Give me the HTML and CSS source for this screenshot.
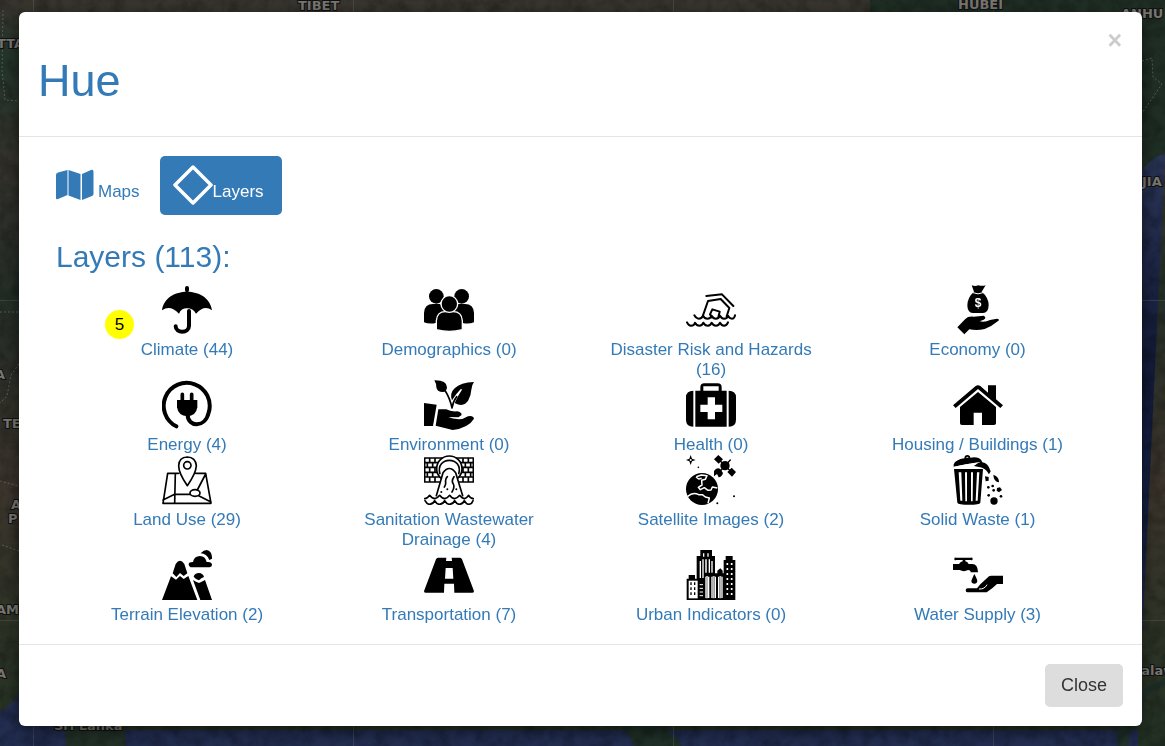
FILE: index.html
```html
<!DOCTYPE html>
<html lang="en">
<head>
<meta charset="utf-8">
<meta name="viewport" content="width=device-width, initial-scale=1">
<title>Hue</title>
<link rel="stylesheet" href="styles.css">
</head>
<body>
<svg class="map" viewBox="0 0 1165 746" preserveAspectRatio="xMidYMid slice" aria-hidden="true">
  <defs>
    <linearGradient id="sea" x1="0" y1="0" x2="0" y2="1">
      <stop offset="0" stop-color="#2a3556"/><stop offset=".35" stop-color="#131c3a"/><stop offset=".6" stop-color="#142042"/><stop offset=".8" stop-color="#242f52"/><stop offset="1" stop-color="#222d50"/>
    </linearGradient>
    <linearGradient id="west" x1="0" y1="0" x2="0" y2="1">
      <stop offset="0" stop-color="#38352f"/><stop offset=".08" stop-color="#233529"/><stop offset=".22" stop-color="#35332d"/><stop offset=".4" stop-color="#242e27"/><stop offset=".65" stop-color="#3c352d"/><stop offset=".85" stop-color="#2e3427"/><stop offset="1" stop-color="#233124"/>
    </linearGradient>
    <filter id="terrain"><feTurbulence type="fractalNoise" baseFrequency=".08" numOctaves="4" seed="4"/><feColorMatrix values="0 0 0 0 0  0 0 0 0 0  0 0 0 0 0  1.4 0 0 0 -.5"/></filter>
  </defs>
  <rect width="1165" height="746" fill="url(#west)"/>
  <path d="M0 0H1165V14H0Z" fill="#38352f"/>
  <path d="M870 0H1165V152L1142 170H870Z" fill="#202f25"/>
  <path d="M1165 154Q1152 156 1138 175V746H0V712Q14 705 20 690L80 710L90 730H1138Z" fill="url(#sea)"/>
  <path d="M64 720H124L126 746H66Z" fill="#223128"/>
  <path d="M617 720H655L680 742L682 746H635Z" fill="#203028"/>
  <path d="M1138 692L1165 678V684L1138 701ZM1116 726H1131L1128 746H1118Z" fill="#20322b"/>
  <rect width="1165" height="746" filter="url(#terrain)" opacity=".35"/>
  <path d="M0 300.500H1165M0 620.500H1165M33.500 0V746M353.500 0V746M673.500 0V746M993.500 0V746" stroke="#6b7770" stroke-opacity=".3" fill="none"/>
  <path d="M3 10L2 70L5 100L19 101M0 312H19M19 364L11 375L7 396L0 403M0 481L19 486M2 545L19 551M1142 61L1152 58L1153 77L1162 84L1142 113" stroke="#777" stroke-opacity=".6" stroke-dasharray="2 2" fill="none"/>
  <g class="map-labels">
    <text x="298" y="10">TIBET</text><text x="958" y="9">HUBEI</text><text x="1121" y="18">ANHU</text>
    <text x="-3" y="48">TTA</text><text x="1142" y="186">JIA</text><text x="-5" y="379">A</text><text x="3" y="428">TE</text>
    <text x="11" y="509">A</text><text x="8" y="523">P</text><text x="-4" y="614">AM</text><text x="-4" y="678">A</text>
    <text x="54" y="730">Sri Lanka</text><text x="1132" y="675">Palaw</text>
  </g>
</svg>

<main class="modal" role="dialog" aria-labelledby="title">
  <header class="modal-header">
    <h1 class="title" id="title">Hue</h1>
    <button class="dismiss" type="button" aria-label="Dismiss">×</button>
  </header>

  <section class="modal-body">
    <nav class="tabs">
      <a class="tab" href="#maps">
        <svg class="tab-icon" viewBox="0 0 40 40"><path fill="currentColor" d="M1 10Q1 8 3 7.500L12.500 5V30L3 34Q1 35 1 33ZM13.500 5L25.500 9V35L13.500 30.500ZM27 9L36 5Q38.500 4 38.500 7V29Q38.500 30.500 37 31L27 35Z"/></svg>
        <span class="tab-text spaced">Maps</span>
      </a>
      <a class="tab active" href="#layers" aria-current="page">
        <svg class="tab-icon" viewBox="0 0 40 40"><path fill="none" stroke="currentColor" stroke-width="3.500" stroke-linejoin="round" d="M20 2L38 20L20 38L2 20Z"/></svg>
        <span class="tab-text">Layers</span>
      </a>
    </nav>

    <h2 class="subtitle">Layers (113):</h2>

    <div class="layers">
      <a class="layer" href="#climate">
        <span class="badge">5</span>
        <svg class="icon" viewBox="0 0 150 150"><path d="M0 76C5 38 40 20 75 20S145 38 150 76Q127 58 102 86Q93 70 75 70T51 86Q25 58 0 76Z"/><path class="line" stroke-width="12" d="M75 9V16M81 78V122C81 147 41 145 41 124"/></svg>
        <span>Climate (44)</span>
      </a>
      <a class="layer" href="#demographics">
        <svg class="icon" viewBox="0 0 150 150"><circle cx="37" cy="34" r="22"/><circle cx="113" cy="34" r="22"/><path d="M0 112V84Q1 57 27 57H48L75 85L102 57H123Q149 57 150 84V112Q134 118 116 114L75 100L35 114Q16 118 0 112Z"/><g stroke="#fff" stroke-width="4"><path d="M37 134V107Q39 80 64 80H88Q113 80 115 107V134Q76 144 37 134Z"/><circle cx="76" cy="57" r="25"/></g></svg>
        <span>Demographics (0)</span>
      </a>
      <a class="layer" href="#hazards">
        <svg class="icon" viewBox="0 0 150 150"><path class="line" stroke-width="6" d="M61 33L108 28L142 63M50 94L66 48L104 42L130 69L122 94M78 97L72 88L79 73L101 80L97 97M25 91Q31 101 38 101Q48 101 51 92Q56 101 64 101Q74 101 77 92Q82 101 89 101Q99 101 102 92Q107 101 114 101Q124 101 126 92Q130 101 138 101Q145 101 147 91M3 112Q8 122 15 122Q25 122 27 113Q32 122 40 122Q49 122 52 113Q57 122 65 122Q74 122 77 113Q82 122 90 122Q99 122 102 113Q107 122 114 122Q122 122 126 112"/></svg>
        <span>Disaster Risk and Hazards (16)</span>
      </a>
      <a class="layer" href="#economy">
        <svg class="icon" viewBox="0 0 150 150"><path d="M56 1Q66 5 76 1Q88 4 98 1L86 20Q107 37 107 61Q106 84 90 84H59Q44 82 43 62Q43 37 63 20Z"/><path d="M13 127L37 102Q45 93 62 95L92 92Q102 97 92 104L80 109Q98 112 111 105L132 101Q144 103 132 110Q113 126 95 132Q72 138 49 133L34 148Z"/><path d="M60 23Q75 30 90 23" stroke="#fff" stroke-width="3" fill="none"/><text class="dollar" x="75" y="67">$</text></svg>
        <span>Economy (0)</span>
      </a>

      <a class="layer" href="#energy">
        <svg class="icon" viewBox="0 0 150 150"><path class="line" stroke-width="12" d="M43 139A69 69 0 1 1 140 98C129 145 78 142 77 105"/><path class="line" stroke-width="11" d="M61 43V65M89 43V65"/><path d="M45 60H106V82Q102 108 76 109Q49 108 45 82Z"/></svg>
        <span>Energy (4)</span>
      </a>
      <a class="layer" href="#environment">
        <svg class="icon" viewBox="0 0 150 150"><path d="M31 1Q68 0 69 22Q68 36 57 36Q38 36 37 21Q37 11 31 1ZM150 6Q110 7 92 25Q76 40 84 61Q96 41 111 26L114 29Q102 46 92 69Q119 84 133 61Q141 46 142 29Q143 15 150 6ZM0 69L38 74L27 138H0ZM43 88H67Q80 96 100 94Q116 98 112 106L103 112L73 111Q88 119 115 117L132 109Q148 106 150 116Q134 143 86 150L35 137Z"/><path class="line" stroke-width="5" d="M64 33Q78 55 84 84Q87 64 98 50"/></svg>
        <span>Environment (0)</span>
      </a>
      <a class="layer" href="#health">
        <svg class="icon" viewBox="0 0 150 150"><path d="M28 32H43V22Q43 10 55 10H95Q107 10 107 22V32H122V140H28ZM52 32H98V19H52ZM65 52V74H43V96H65V118H87V96H109V74H87V52Z" fill-rule="evenodd"/><path d="M22 32V140Q0 140 0 119V52Q0 32 22 32ZM128 32V140Q150 140 150 119V52Q150 32 128 32Z"/></svg>
        <span>Health (0)</span>
      </a>
      <a class="layer" href="#housing">
        <svg class="icon" viewBox="0 0 150 150"><path d="M0 76L68 18Q75 13 82 18L105 38V16H129V58L150 76L142 84L75 27L8 84ZM21 81L75 36L129 81V130Q129 135 123 135H87V98H62V135H27Q21 135 21 130Z"/></svg>
        <span>Housing / Buildings (1)</span>
      </a>

      <a class="layer" href="#land">
        <svg class="icon" viewBox="0 0 150 150"><path class="line" stroke-width="5" d="M50 55H17L3 145H147L131 55H101M40 55L38 145M3 135L38 118H84M131 57L106 105M110 122L147 141M76 92Q50 54 50 32Q51 7 76 6Q101 7 103 32Q102 54 76 92Z"/><circle class="line" stroke-width="5" cx="76" cy="31" r="11"/><ellipse class="line" stroke-width="5" cx="99" cy="114" rx="15" ry="10"/></svg>
        <span>Land Use (29)</span>
      </a>
      <a class="layer" href="#sanitation">
        <svg class="icon" viewBox="0 0 150 150"><path class="line" stroke-width="5" d="M2 9H148V81H2ZM2 23H148M2 37H148M2 52H148M2 66H148M17 9V23M33 9V23M117 9V23M133 9V23M10 23V37M26 23V37M124 23V37M140 23V37M17 37V52M33 37V52M117 37V52M133 37V52M10 52V66M26 52V66M124 52V66M140 52V66M17 66V81M33 66V81M117 66V81M133 66V81"/><circle cx="76" cy="41" r="38" class="outlined"/><path class="outlined" d="M48 58C32 2 120 2 104 58"/><path d="M37 122L57 53Q76 28 95 53L116 122Z" fill="#fff"/><path class="line" stroke-width="5" d="M37 122L57 53Q76 28 95 53L116 122M70 65Q63 72 65 82Q66 89 61 96M90 65Q81 78 88 87Q93 97 84 111M2 131Q10 131 17 121Q24 131 33 131Q40 130 47 121Q54 131 63 131Q70 130 77 121Q84 131 92 131Q100 130 107 121Q114 131 122 131Q128 130 134 121Q140 131 148 131M3 137Q9 148 17 148Q28 147 32 137Q38 148 47 148Q58 147 62 137Q68 148 77 148Q88 147 92 137Q98 148 107 148Q117 147 121 137Q127 148 134 148Q144 147 147 137"/><circle cx="52" cy="111" r="3"/><circle cx="70" cy="103" r="3"/><circle cx="97" cy="103" r="3"/></svg>
        <span>Sanitation Wastewater Drainage (4)</span>
      </a>
      <a class="layer" href="#satellite">
        <svg class="icon" viewBox="0 0 150 150"><circle cx="48" cy="102" r="48"/><path d="M31 65L46 60L63 62L58 73L47 76L48 90L37 97L43 104L55 98L66 106L75 105L79 96L94 99M5 124Q21 110 38 119L49 119L58 126L70 129L66 145M30 66L38 72L47 70" stroke="#fff" stroke-width="4.500" fill="none" stroke-linejoin="round"/><path d="M97 0L111 13L98 26L84 13ZM137 38L150 51L138 65L124 51Z"/><circle cx="117" cy="32" r="14"/><path class="line" stroke-width="4" d="M97 12L137 52M117 32L133 15M98 54L117 32"/><path d="M84 48Q92 35 103 42L111 54Q108 66 98 67L93 57L84 64Z"/><path d="M14 0L18 11L29 15L18 19L14 30L10 19L0 15L10 11Z"/><circle cx="14" cy="15" r="3" fill="#fff"/><circle cx="37" cy="37" r="2.500"/><circle cx="144" cy="124" r="3"/><circle cx="94" cy="145" r="3"/></svg>
        <span>Satellite Images (2)</span>
      </a>
      <a class="layer" href="#waste">
        <svg class="icon" viewBox="0 0 150 150"><path d="M3 42H90L82 143Q80 149 48 149T13 143ZM17 52L22 137H28L25 52ZM36 52L37 139H42V52ZM54 52V139H59L60 52ZM72 52L68 137H74L79 52Z" fill-rule="evenodd"/><path d="M2 28Q8 14 34 10Q35 0 43 0Q51 0 52 8Q77 4 85 16L88 22Q105 23 113 49L108 58Q98 38 78 36L61 33Q75 23 84 20Q43 26 2 35ZM39 8H47Q43 3 39 8Z" fill-rule="evenodd"/><path d="M5 35Q45 26 74 25L61 34L80 38H5Z" fill="#fff"/><path d="M121 59Q139 66 138 82Q122 80 121 59ZM96 64L107 66V77L98 79ZM132 99L141 97L147 105L138 112L131 107Z"/><circle cx="123" cy="138" r="11"/><circle cx="106" cy="97" r="4"/><circle cx="119" cy="93" r="4"/><circle cx="122" cy="106" r="4"/><circle cx="107" cy="121" r="4"/><circle cx="144" cy="124" r="4"/></svg>
        <span>Solid Waste (1)</span>
      </a>

      <a class="layer" href="#terrain-elevation">
        <svg class="icon" viewBox="0 0 150 150"><path d="M32 70L41 42Q54 22 67 42L76 70L65 78L54 69L43 81ZM27 79L42 89L54 78L65 87L79 78L106 150H0ZM95 80Q98 69 111 69Q123 70 126 81L118 85L111 91L102 87ZM93 90L102 95L111 99L119 95L129 90L150 150H115Z"/><path d="M86 52Q80 51 80 43Q80 36 93 36Q96 18 114 18Q130 18 134 36Q149 34 150 44Q150 51 143 52ZM116 10Q125 0 134 0Q151 3 150 26L142 30Q134 10 116 10Z"/></svg>
        <span>Terrain Elevation (2)</span>
      </a>
      <a class="layer" href="#transportation">
        <svg class="icon" viewBox="0 0 150 150"><path d="M42 23H67L66 33H84L83 23H108Q112 23 114 28L149 121Q152 128 144 128H91L90 101H61L60 128H6Q-2 128 1 121L36 28Q38 23 42 23ZM65 54L63 86H88L86 54Z" fill-rule="evenodd"/></svg>
        <span>Transportation (7)</span>
      </a>
      <a class="layer" href="#urban">
        <svg class="icon" viewBox="0 0 150 150"><path d="M2 86H8V75H27V86H32V18H43V0H78V18H87V70H94V62L103 55L110 62V70H113V30H119V18H140V30H148V150H2Z"/><path stroke="#fff" stroke-width="4" d="M53 10V20M66 10V20M43 33V84M51 28V84M70 28V68M78 33V68M60 80V144M68 80V144M78 80V144M88 80V144M98 80V144M108 80V144"/><path stroke="#bbb" stroke-width="6" d="M63 78V145M83 78V145M103 78V145M60 28V68"/><path d="M8 92H35V145H8Z" fill="#fff"/><path stroke="#000" stroke-width="4" stroke-dasharray="8 7" d="M15 97V137M26 97V137"/><path stroke="#fff" stroke-width="5" stroke-dasharray="6 9" d="M124 39V137M137 39V137"/><path stroke="#fff" stroke-width="3" d="M41 104H51M41 115H51M41 126H51M41 137H51"/></svg>
        <span>Urban Indicators (0)</span>
      </a>
      <a class="layer" href="#water">
        <svg class="icon" viewBox="0 0 150 150"><path d="M0 42H18Q23 35 29 34V30H9Q4 32 4 27T9 23H53Q59 22 59 27T53 30H37V34Q43 35 47 42H58Q74 43 75 65V67H53Q53 60 45 60Q33 67 20 60H0ZM64 72Q73 88 73 93Q72 101 64 101T55 93Q56 88 64 72ZM150 77V102H132Q118 116 101 127H43Q38 127 38 121T44 115H72L82 103L108 79L114 77Z"/><path d="M78 117Q95 118 102 104" fill="none" stroke="#fff" stroke-width="3"/></svg>
        <span>Water Supply (3)</span>
      </a>
    </div>
  </section>

  <footer class="modal-footer">
    <button class="close" type="button">Close</button>
  </footer>
</main>
</body>
</html>
```
FILE: styles.css
```css
* {
  box-sizing: border-box;
}

body {
  margin: 0;
  min-height: 100vh;
  padding: 12px 23px 20px 19px;
  background: #1d2423;
  color: #333;
  font: 17px/20px "Liberation Sans", Arial, sans-serif;
}

.map {
  position: fixed;
  inset: 0;
  width: 100%;
  height: 100%;
}

.map-labels {
  fill: #77756f;
  stroke: #111;
  stroke-width: 2px;
  paint-order: stroke;
  font: bold 13px/16px "DejaVu Sans", sans-serif;
}

.modal {
  position: relative;
  background: #fff;
  border-radius: 6px;
  box-shadow: 0 5px 15px rgba(0, 0, 0, 0.5);
}

.modal-header {
  display: flex;
  justify-content: space-between;
  align-items: flex-start;
  padding: 16px 20px 30px 19px;
  border-bottom: 1px solid #e5e5e5;
}

.title,
.subtitle {
  margin: 0;
  color: #337ab7;
  font-weight: 400;
}

.title {
  margin-top: 28px;
  font-size: 45px;
  line-height: 50px;
}

.dismiss {
  padding: 0;
  border: 0;
  background: none;
  color: #ccc;
  font: bold 25px/25px "Liberation Sans", Arial, sans-serif;
  cursor: pointer;
}

.modal-body {
  padding: 19px 29px 19px 37px;
}

.tabs {
  display: flex;
  gap: 5px;
  margin-left: -15px;
}

.tab {
  display: flex;
  align-items: flex-end;
  padding: 9px 18px 10px 13px;
  border-radius: 5px;
  color: #337ab7;
  text-decoration: none;
}

.tab:first-child {
  padding-left: 14px;
  padding-right: 15px;
}

.tab.active {
  background: #337ab7;
  color: #fff;
}

.tab-icon {
  width: 40px;
  height: 40px;
}

.tab-text {
  margin-bottom: 3px;
}

.spaced {
  padding-left: 3px;
}

.subtitle {
  margin: 25px 0 12px;
  font-size: 30px;
  line-height: 33px;
}

.layers {
  display: grid;
  grid-template-columns: 1fr 1fr 1fr 1.034fr;
}

.layer {
  position: relative;
  display: flex;
  flex-direction: column;
  align-items: center;
  gap: 5px;
  padding: 0 20px;
  color: #337ab7;
  text-align: center;
  text-decoration: none;
}

.icon {
  width: 50px;
  height: 50px;
  fill: #000;
}

.line {
  fill: none;
  stroke: #000;
  stroke-linecap: round;
  stroke-linejoin: round;
}

.outlined {
  fill: #fff;
  stroke: #000;
  stroke-width: 5px;
}

.dollar {
  fill: #fff;
  font: bold 36px/36px "Liberation Sans", Arial, sans-serif;
  text-anchor: middle;
}

.badge {
  position: absolute;
  top: 25px;
  left: 49px;
  width: 29px;
  border-radius: 50%;
  background: #ff0;
  color: #000;
  line-height: 29px;
}

.modal-footer {
  display: flex;
  justify-content: flex-end;
  padding: 19px;
  border-top: 1px solid #e5e5e5;
}

.close {
  padding: 11px 16px;
  border: 0;
  border-radius: 5px;
  background: #ddd;
  color: #333;
  font: 18px/21px "Liberation Sans", Arial, sans-serif;
  cursor: pointer;
}
```
